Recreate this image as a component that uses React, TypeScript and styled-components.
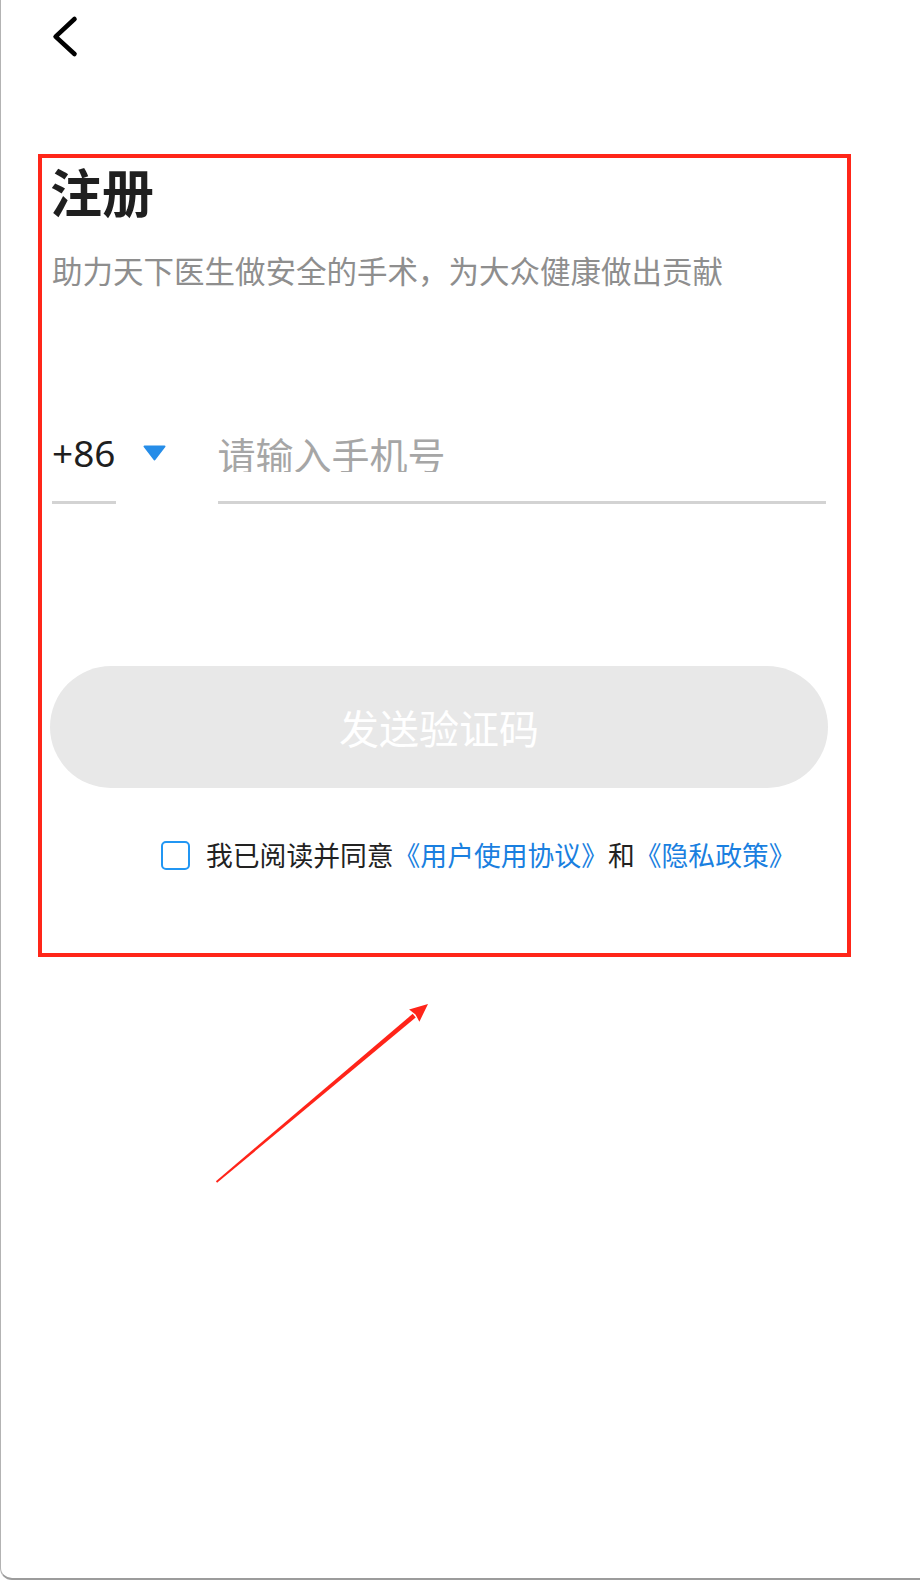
import React from "react";
import styled, { createGlobalStyle } from "styled-components";

const GlobalStyle = createGlobalStyle`
  html, body {
    margin: 0;
    padding: 0;
    background: #ffffff;
  }
  body {
    font-family: "Noto Sans", "Noto Sans CJK SC", sans-serif;
  }
`;

const Frame = styled.div`
  width: 920px;
  height: 1580px;
  box-sizing: border-box;
  border-left: 1px solid #b3b3b3;
  border-bottom: 2px solid #9c9c9c;
  border-bottom-left-radius: 12px;
  overflow: hidden;
  display: flex;
  flex-direction: column;
  background: #ffffff;
`;

const Header = styled.div`
  height: 154px;
  box-sizing: border-box;
  padding: 14px 0 0 49px;
  display: flex;
  align-items: flex-start;
`;

const BackButton = styled.button`
  border: none;
  background: transparent;
  padding: 0;
  margin: 0;
  width: 30px;
  height: 46px;
  display: block;
  cursor: pointer;
`;

const Highlight = styled.section`
  margin-left: 37px;
  width: 813px;
  height: 803px;
  box-sizing: border-box;
  border: 4px solid #ff2619;
  padding: 7px 21px 0 10px;
  display: flex;
  flex-direction: column;
  align-items: stretch;
`;

const Title = styled.h1`
  margin: 0 0 0 -2px;
  font-family: "Noto Sans CJK SC", sans-serif;
  font-size: 52px;
  line-height: 52px;
  font-weight: 700;
  color: #1f1f1f;
`;

const Subtitle = styled.p`
  margin: 38px 0 0;
  font-family: "Noto Sans CJK SC", sans-serif;
  font-size: 30.5px;
  line-height: 30.5px;
  color: #8e8e8e;
  white-space: nowrap;
`;

const PhoneRow = styled.div`
  margin-top: 148.5px;
  display: flex;
  align-items: flex-start;
`;

const CountryCode = styled.div`
  font-family: "Noto Sans", "Noto Sans CJK SC", sans-serif;
  font-size: 37px;
  line-height: 38px;
  height: 38px;
  color: #1f1f1f;
  padding-bottom: 29px;
  border-bottom: 3px solid #d3d3d3;
`;

const Caret = styled.svg`
  margin-left: 27px;
  margin-top: 11px;
  flex: none;
`;

const PhoneField = styled.div`
  margin-left: 52px;
  flex: 1;
  padding-bottom: 29px;
  border-bottom: 3px solid #d3d3d3;
`;

const PhoneInput = styled.input`
  display: block;
  width: 100%;
  height: 38px;
  border: none;
  outline: none;
  padding: 0;
  margin: 0;
  background: transparent;
  font-family: "Noto Sans CJK SC", sans-serif;
  font-size: 38px;
  line-height: 38px;
  color: #1f1f1f;
  &::placeholder {
    color: #a6a6a6;
  }
`;

const SendButton = styled.button`
  margin: 162px 0 0 -2px;
  width: 778px;
  height: 122px;
  border: none;
  border-radius: 61px;
  background: #e8e8e8;
  color: #ffffff;
  font-family: "Noto Sans CJK SC", sans-serif;
  font-size: 40px;
  align-self: flex-start;
  padding: 0;
`;

const Agreement = styled.div`
  margin: 52px 0 0 109px;
  display: flex;
  align-items: center;
  gap: 16px;
  height: 30px;
`;

const CheckBox = styled.span`
  width: 29px;
  height: 29px;
  box-sizing: border-box;
  border: 2.5px solid #2196f3;
  border-radius: 5px;
  flex: none;
`;

const AgreeText = styled.span`
  font-family: "Noto Sans CJK SC", sans-serif;
  font-size: 26.8px;
  line-height: 30px;
  color: #222222;
  white-space: nowrap;
`;

const Link = styled.span`
  color: #1a7fe0;
`;

const Annotation = styled.svg`
  margin: 43px 0 0 214px;
  display: block;
  flex: none;
`;

export default function App() {
  return (
    <>
      <GlobalStyle />
      <Frame>
        <Header>
          <BackButton aria-label="返回">
            <svg width="30" height="46" viewBox="0 0 30 46">
              <path
                d="M24.5 5 L5.6 22.6 L24.5 40"
                fill="none"
                stroke="#000"
                strokeWidth="4.6"
                strokeLinecap="round"
                strokeLinejoin="round"
              />
            </svg>
          </BackButton>
        </Header>
        <Highlight>
          <Title>注册</Title>
          <Subtitle>助力天下医生做安全的手术，为大众健康做出贡献</Subtitle>
          <PhoneRow>
            <CountryCode>+86</CountryCode>
            <Caret width="23" height="16" viewBox="0 0 23 16">
              <path d="M1.5 1.5 H21.5 L11.5 14.5 Z" fill="#268de8" stroke="#268de8" strokeWidth="2" strokeLinejoin="round" />
            </Caret>
            <PhoneField>
              <PhoneInput placeholder="请输入手机号" />
            </PhoneField>
          </PhoneRow>
          <SendButton>发送验证码</SendButton>
          <Agreement>
            <CheckBox />
            <AgreeText>
              我已阅读并同意<Link>《用户使用协议》</Link>和<Link>《隐私政策》</Link>
            </AgreeText>
          </Agreement>
        </Highlight>
        <Annotation width="220" height="190" viewBox="0 0 220 190">
          <polygon points="2.1,182.8 0.9,181.2 197.7,13.8 200.7,17.4" fill="#ff2419" />
          <polygon points="213,4 204.4,21.7 200.5,14.5 194.1,9.5" fill="#ff2419" />
        </Annotation>
      </Frame>
    </>
  );
}
